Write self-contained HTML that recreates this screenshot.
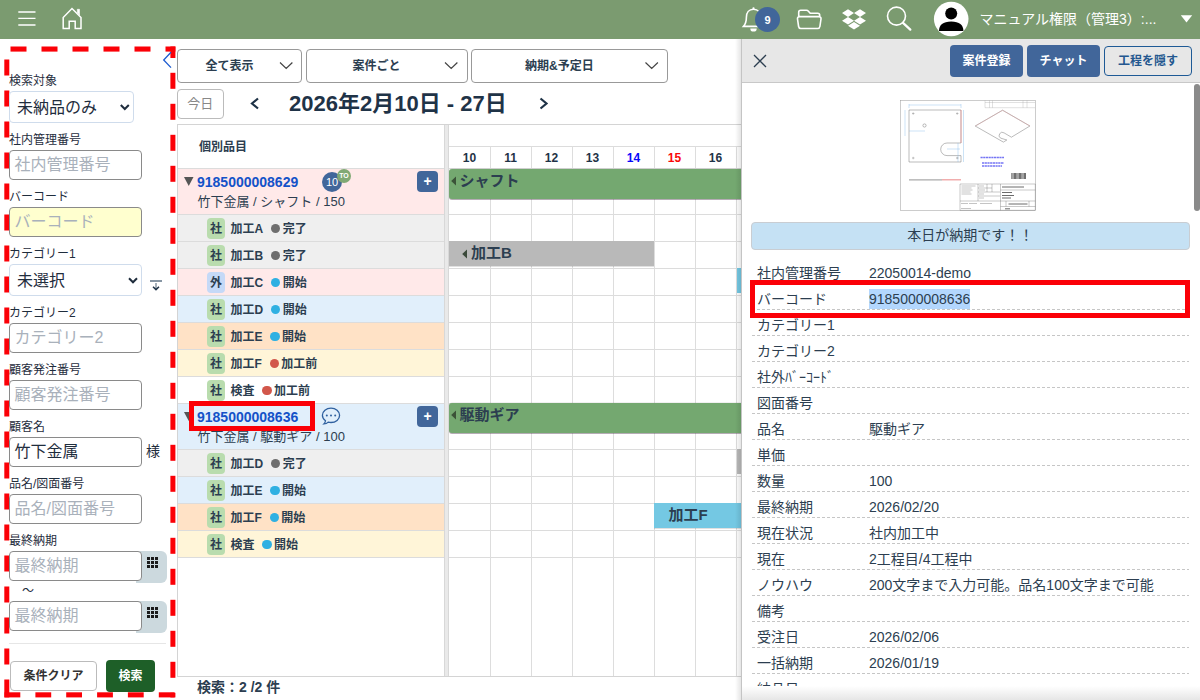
<!DOCTYPE html>
<html lang="ja">
<head>
<meta charset="utf-8">
<title>工程管理</title>
<style>
*{box-sizing:border-box;margin:0;padding:0}
html,body{width:1200px;height:700px;overflow:hidden;background:#fff}
body{font-family:"Liberation Sans","Noto Sans CJK JP",sans-serif;color:#1f3347;font-size:12px;position:relative}
.a{position:absolute;white-space:nowrap}
#top{left:0;top:0;width:1200px;height:39px;background:#7b9b70}
.lbl{font-size:12px;line-height:14px;color:#1f2d3d;left:9px}
.inp{left:9px;width:133px;height:30px;border:1px solid #8a8a8a;border-radius:4px;background:#fff;font-size:16px;line-height:28px;padding-left:4.500px;color:#a9b1bb}
.sel{left:9px;height:32px;border:1px solid #cfdcec;border-radius:4px;background:#fff;font-size:16px;line-height:32px;padding-left:7px;color:#1f2d3d}
.dd{top:49px;height:34px;border:1px solid #999;border-radius:4px;background:#fff;font-size:12px;font-weight:bold;line-height:31px;text-align:center;color:#2c3e50}
.row{left:178px;width:267px;height:27px}
.g{background:#efefef}.p{background:#ffe9e9}.b{background:#e1effb}.o{background:#ffe2c6}.y{background:#fff5d8}.w{background:#fff}
.tag{left:207px;width:18px;height:21px;border-radius:4px;background:#b9dcae;font-size:12px;font-weight:bold;line-height:22px;text-align:center;color:#2c3e50}
.tag.out{background:#c5d9f7}
.pn{left:230.500px;font-size:12px;font-weight:bold;line-height:29px;color:#2c3e50}
.dot{display:inline-block;width:9.300px;height:9.300px;border-radius:50%;vertical-align:-0.5px;margin-left:7.700px;margin-right:2.500px}
.dg{background:#6e6e6e}.db{background:#2fb0e2}.dr{background:#d2574b}
.hl{left:448px;width:293px;height:1px;background:#ddd}
.vl{top:146px;width:1px;height:530px;background:#ddd}
.dl{left:757px;font-size:14px;line-height:20px;color:#2c3e50}
.dv{left:869px;font-size:14px;line-height:20px;color:#2c3e50}
.dot-line{width:437px;height:1px;background:repeating-linear-gradient(90deg,#c6c6c6 0 3px,transparent 3px 5px)}
</style>
</head>
<body>
<!-- TOP BAR -->
<div class="a" id="top"></div>
<svg class="a" style="left:0;top:0" width="1200" height="39" viewBox="0 0 1200 39" fill="none" stroke="#fff" stroke-width="1.500">
<path d="M18.300 12h17.200M18.300 18.400h17.200M18.300 25h17.200" stroke-width="1.300"/>
<path d="M63.200 28.400V17.500L72 8.500l9 9v10.900h-5.800v-7.200h-6v7.200z" stroke-width="1.500" stroke-linejoin="miter"/>
<path d="M77.300 12.500V9.300h2.200v5.700z" fill="#fff" stroke-width=".6"/>
<path d="M753.500 9.300c-4.600 0-7.100 3.500-7.100 8 0 5-1.400 7.400-2.900 9.100h20c-1.500-1.700-2.900-4.100-2.900-9.100 0-4.500-2.500-8-7.100-8z" stroke-width="1.600"/><circle cx="753.500" cy="8.300" r="1.100" fill="#fff" stroke="none"/>
<path d="M750.300 28.400h6.400a3.200 3.200 0 0 1-6.400 0z" fill="#fff" stroke="none"/>
<circle cx="767.500" cy="19.500" r="12.500" fill="#41669a" stroke="none"/>
<path d="M798.700 16.400v-4.100c0-1.200.8-2 2-2h5.800c.8 0 1.400.3 1.900.9l1.800 2.100h7.500c1.200 0 2 .8 2 2v1.100M799.600 16.600h19.300c1.400 0 2.300 1.100 2.100 2.400l-1.100 7.500c-.2 1.200-1 2-2.200 2h-16.900c-1.200 0-2-.8-2.200-2l-1.100-7.500c-.2-1.300.7-2.400 2.100-2.400z" stroke-width="1.600"/>
<g fill="#fff" stroke="none"><path d="M848 10.500 842 14.300l6 3.800 6-3.800zM860 10.500l-6 3.800 6 3.800 6-3.800zM842 21.900l6 3.800 6-3.800-6-3.800zM860 18.100l-6 3.800 6 3.800 6-3.800zM848 27l6 3.800 6-3.800-6-3.800z" transform="translate(0,-1.200)"/></g>
<circle cx="896.500" cy="16.100" r="9" stroke-width="1.600"/><path d="M903 22.800l7.300 6.800" stroke-width="2.300" stroke-linecap="round"/>
<circle cx="951.200" cy="19" r="17.300" fill="#fff" stroke="none"/>
<g fill="#000" stroke="none"><circle cx="951.200" cy="13.500" r="6"/><path d="M939 31c0-6 4-9.500 12.200-9.500s12.200 3.500 12.200 9.500z"/></g>
<path d="M1180.800 15.300h11.400l-5.700 7.200z" fill="#fff" stroke="none"/>
</svg>
<div class="a" style="left:760.500px;top:12.500px;width:14px;text-align:center;font-size:11px;font-weight:bold;line-height:14px;color:#fff">9</div>
<div class="a" style="left:979.500px;top:8.500px;font-size:14px;line-height:20px;color:#fff">マニュアル権限（管理3）:...</div>

<!-- LEFT PANEL placeholder -->
<div id="left">
<svg class="a" style="left:0;top:40px" width="180" height="660" viewBox="0 40 180 660" fill="none">
<g fill="#fb0007"><rect x="10.5" y="46.5" width="16.0" height="5.1"/><rect x="41.5" y="46.5" width="16.0" height="5.1"/><rect x="72.5" y="46.5" width="16.0" height="5.1"/><rect x="103.5" y="46.5" width="16.0" height="5.1"/><rect x="134.5" y="46.5" width="16.0" height="5.1"/><rect x="165.5" y="46.5" width="9.9" height="5.1"/><rect x="170.4" y="46.5" width="5.0" height="11.5"/><rect x="170.4" y="72.8" width="5.0" height="16.0"/><rect x="170.4" y="103.8" width="5.0" height="16.0"/><rect x="170.4" y="134.8" width="5.0" height="16.0"/><rect x="170.4" y="165.8" width="5.0" height="16.0"/><rect x="170.4" y="196.8" width="5.0" height="16.0"/><rect x="170.4" y="227.8" width="5.0" height="16.0"/><rect x="170.4" y="258.8" width="5.0" height="16.0"/><rect x="170.4" y="289.8" width="5.0" height="16.0"/><rect x="170.4" y="320.8" width="5.0" height="16.0"/><rect x="170.4" y="351.8" width="5.0" height="16.0"/><rect x="170.4" y="382.8" width="5.0" height="16.0"/><rect x="170.4" y="413.8" width="5.0" height="16.0"/><rect x="170.4" y="444.8" width="5.0" height="16.0"/><rect x="170.4" y="475.8" width="5.0" height="16.0"/><rect x="170.4" y="506.8" width="5.0" height="16.0"/><rect x="170.4" y="537.8" width="5.0" height="16.0"/><rect x="170.4" y="568.8" width="5.0" height="16.0"/><rect x="170.4" y="599.8" width="5.0" height="16.0"/><rect x="170.4" y="630.8" width="5.0" height="16.0"/><rect x="170.4" y="661.8" width="5.0" height="16.0"/><rect x="170.4" y="692.8" width="5.0" height="4.6"/><rect x="4.5" y="692.3" width="15.8" height="5.1"/><rect x="35.4" y="692.3" width="15.8" height="5.1"/><rect x="66.2" y="692.3" width="15.8" height="5.1"/><rect x="97.1" y="692.3" width="15.8" height="5.1"/><rect x="127.9" y="692.3" width="15.8" height="5.1"/><rect x="158.8" y="692.3" width="15.8" height="5.1"/><rect x="4.3" y="59.5" width="5.0" height="16.0"/><rect x="4.3" y="90.5" width="5.0" height="16.0"/><rect x="4.3" y="121.5" width="5.0" height="16.0"/><rect x="4.3" y="152.5" width="5.0" height="16.0"/><rect x="4.3" y="183.5" width="5.0" height="16.0"/><rect x="4.3" y="214.5" width="5.0" height="16.0"/><rect x="4.3" y="245.5" width="5.0" height="16.0"/><rect x="4.3" y="276.5" width="5.0" height="16.0"/><rect x="4.3" y="307.5" width="5.0" height="16.0"/><rect x="4.3" y="338.5" width="5.0" height="16.0"/><rect x="4.3" y="369.5" width="5.0" height="16.0"/><rect x="4.3" y="400.5" width="5.0" height="16.0"/><rect x="4.3" y="431.5" width="5.0" height="16.0"/><rect x="4.3" y="462.5" width="5.0" height="16.0"/><rect x="4.3" y="493.5" width="5.0" height="16.0"/><rect x="4.3" y="524.5" width="5.0" height="16.0"/><rect x="4.3" y="555.5" width="5.0" height="16.0"/><rect x="4.3" y="586.5" width="5.0" height="16.0"/><rect x="4.3" y="617.5" width="5.0" height="16.0"/><rect x="4.3" y="648.5" width="5.0" height="16.0"/><rect x="4.3" y="679.5" width="5.0" height="17.9"/></g>
<path d="M171 52.300 163.700 60 171 67.600" stroke="#1c5bd0" stroke-width="1.300"/>
<path d="M150 281h12" stroke="#8796a4" stroke-width="2"/><path d="M156 283v5.800" stroke="#97a3ae" stroke-width="1.700"/><path d="M153 286.800l3 2.800 3-2.800" stroke="#1f3347" stroke-width="1.500"/>
</svg>
<div class="a lbl" style="top:74px">検索対象</div>
<div class="a sel" style="top:91px;width:125px">未納品のみ</div>
<div class="a lbl" style="top:133px">社内管理番号</div>
<div class="a inp" style="top:150px">社内管理番号</div>
<div class="a lbl" style="top:190px">バーコード</div>
<div class="a inp" style="top:207px;background:#ffffcf">バーコード</div>
<div class="a lbl" style="top:247px">カテゴリー1</div>
<div class="a sel" style="top:264px;width:133px">未選択</div>
<div class="a lbl" style="top:306px">カテゴリー2</div>
<div class="a inp" style="top:323px">カテゴリー2</div>
<div class="a lbl" style="top:363px">顧客発注番号</div>
<div class="a inp" style="top:380px">顧客発注番号</div>
<div class="a lbl" style="top:420px">顧客名</div>
<div class="a inp" style="top:437px;color:#1f2d3d">竹下金属</div>
<div class="a" style="left:146px;top:442px;font-size:14px;line-height:18px;color:#1f2d3d">様</div>
<div class="a lbl" style="top:477px">品名/図面番号</div>
<div class="a inp" style="top:494px">品名/図面番号</div>
<div class="a lbl" style="top:534px">最終納期</div>
<div class="a" style="left:136px;top:551px;width:31px;height:32px;background:#ccd9de;border-radius:0 6px 6px 0"></div>
<div class="a inp" style="top:551px">最終納期</div>
<div class="a" style="left:22px;top:584px;font-size:12px;line-height:14px;color:#1f2d3d">〜</div>
<div class="a" style="left:136px;top:601px;width:31px;height:32px;background:#ccd9de;border-radius:0 6px 6px 0"></div>
<div class="a inp" style="top:601px">最終納期</div>
<svg class="a" style="left:147px;top:557px" width="12" height="64" fill="#1a1a1a"><rect x="0" y="0" width="3" height="3"/><rect x="4" y="0" width="3" height="3"/><rect x="8" y="0" width="3" height="3"/><rect x="0" y="4" width="3" height="3"/><rect x="4" y="4" width="3" height="3"/><rect x="8" y="4" width="3" height="3"/><rect x="0" y="8" width="3" height="3"/><rect x="4" y="8" width="3" height="3"/><rect x="8" y="8" width="3" height="3"/><rect x="0" y="50" width="3" height="3"/><rect x="4" y="50" width="3" height="3"/><rect x="8" y="50" width="3" height="3"/><rect x="0" y="54" width="3" height="3"/><rect x="4" y="54" width="3" height="3"/><rect x="8" y="54" width="3" height="3"/><rect x="0" y="58" width="3" height="3"/><rect x="4" y="58" width="3" height="3"/><rect x="8" y="58" width="3" height="3"/></svg>
<div class="a" style="left:9px;top:643px;width:157px;height:1px;background:#e6e6e6"></div>
<div class="a" style="left:10px;top:661px;width:87px;height:30px;border:1px solid #bbb;border-radius:4px;background:#fff;font-size:12px;font-weight:bold;line-height:28px;text-align:center;color:#333">条件クリア</div>
<div class="a" style="left:106px;top:660px;width:49px;height:32px;border-radius:4px;background:#1e5f28;font-size:12px;font-weight:bold;line-height:32px;text-align:center;color:#fff">検索</div>
<svg class="a" style="left:0;top:0" width="180" height="700" fill="none" stroke="#1f2d3d" stroke-width="2"><path d="M120.800 105l4 4 4-4M129 278.300l4 4 4-4"/></svg>
</div>

<!-- MIDDLE placeholder -->
<div id="mid">
<div class="a dd" style="left:177px;width:125px"></div>
<div class="a" style="left:205.5px;top:58px;font-size:12px;font-weight:bold;line-height:16px;color:#2c3e50">全て表示</div>
<div class="a dd" style="left:306px;width:162px"></div>
<div class="a" style="left:352.5px;top:58px;font-size:12px;font-weight:bold;line-height:16px;color:#2c3e50">案件ごと</div>
<div class="a dd" style="left:471px;width:197px"></div>
<div class="a" style="left:525px;top:58px;font-size:12px;font-weight:bold;line-height:16px;color:#2c3e50">納期&amp;予定日</div>
<svg class="a" style="left:170px;top:40px" width="580" height="90" viewBox="170 40 580 90" fill="none" stroke="#444" stroke-width="1.2"><path d="M280 62.500l6.200 6 6.200-6M445 62.500l6.200 6 6.200-6M645.500 62.500l6.200 6 6.200-6"/><path d="M258 98.500 252 103.500l6 5M540.500 98.500l6 5-6 5" stroke="#1f3347" stroke-width="2.200"/></svg>
<div class="a" style="left:177px;top:89px;width:46.500px;height:30px;border:1px solid #bbb;border-radius:4px;background:#fff;font-size:13px;line-height:27px;text-align:center;color:#888">今日</div>
<div class="a" style="left:289px;top:90px;font-size:22px;font-weight:bold;line-height:28px;color:#1f3347">2026年2月10日 - 27日</div>
<div class="a" style="left:177px;top:124px;width:571px;height:553px;border:1px solid #d4d4d4;border-right:0"></div>
<div class="a" style="left:199px;top:139px;font-size:12px;font-weight:bold;line-height:16px;color:#2c3e50">個別品目</div>
<div class="a row p" style="top:168.5px;height:46px"></div>
<div class="a row g" style="top:214.5px;height:27px"></div>
<div class="a row g" style="top:241.5px;height:27px"></div>
<div class="a row p" style="top:268.5px;height:27px"></div>
<div class="a row b" style="top:295.5px;height:27px"></div>
<div class="a row o" style="top:322.5px;height:27px"></div>
<div class="a row y" style="top:349.5px;height:27px"></div>
<div class="a row w" style="top:376.5px;height:27px"></div>
<div class="a row b" style="top:403.5px;height:46px"></div>
<div class="a row g" style="top:449.5px;height:27px"></div>
<div class="a row b" style="top:476.5px;height:27px"></div>
<div class="a row o" style="top:503.5px;height:27px"></div>
<div class="a row y" style="top:530.5px;height:27px"></div>
<div class="a" style="left:178px;top:168px;width:570px;height:1px;background:#dcdcdc"></div>
<div class="a" style="left:178px;top:214px;width:570px;height:1px;background:#dcdcdc"></div>
<div class="a" style="left:178px;top:241px;width:570px;height:1px;background:#dcdcdc"></div>
<div class="a" style="left:178px;top:268px;width:570px;height:1px;background:#dcdcdc"></div>
<div class="a" style="left:178px;top:295px;width:570px;height:1px;background:#dcdcdc"></div>
<div class="a" style="left:178px;top:322px;width:570px;height:1px;background:#dcdcdc"></div>
<div class="a" style="left:178px;top:349px;width:570px;height:1px;background:#dcdcdc"></div>
<div class="a" style="left:178px;top:376px;width:570px;height:1px;background:#dcdcdc"></div>
<div class="a" style="left:178px;top:403px;width:570px;height:1px;background:#dcdcdc"></div>
<div class="a" style="left:178px;top:449px;width:570px;height:1px;background:#dcdcdc"></div>
<div class="a" style="left:178px;top:476px;width:570px;height:1px;background:#dcdcdc"></div>
<div class="a" style="left:178px;top:503px;width:570px;height:1px;background:#dcdcdc"></div>
<div class="a" style="left:178px;top:530px;width:570px;height:1px;background:#dcdcdc"></div>
<div class="a" style="left:178px;top:557px;width:570px;height:1px;background:#dcdcdc"></div>
<div class="a" style="left:449px;top:146px;width:300px;height:1px;background:#dcdcdc"></div>
<div class="a vl" style="left:490px"></div>
<div class="a vl" style="left:531px"></div>
<div class="a vl" style="left:572px"></div>
<div class="a vl" style="left:613px"></div>
<div class="a vl" style="left:654px"></div>
<div class="a vl" style="left:695px"></div>
<div class="a vl" style="left:736px"></div>
<div class="a" style="left:444px;top:125px;width:5px;height:551px;background:#e9e9e9;border-left:1px solid #d8d8d8;border-right:1px solid #d8d8d8"></div>
<div class="a" style="left:449px;top:150px;width:41px;text-align:center;font-size:12px;font-weight:bold;line-height:16px;color:#1f3347">10</div>
<div class="a" style="left:490px;top:150px;width:41px;text-align:center;font-size:12px;font-weight:bold;line-height:16px;color:#1f3347">11</div>
<div class="a" style="left:531px;top:150px;width:41px;text-align:center;font-size:12px;font-weight:bold;line-height:16px;color:#1f3347">12</div>
<div class="a" style="left:572px;top:150px;width:41px;text-align:center;font-size:12px;font-weight:bold;line-height:16px;color:#1f3347">13</div>
<div class="a" style="left:613px;top:150px;width:41px;text-align:center;font-size:12px;font-weight:bold;line-height:16px;color:#0808fa">14</div>
<div class="a" style="left:654px;top:150px;width:41px;text-align:center;font-size:12px;font-weight:bold;line-height:16px;color:#fa0808">15</div>
<div class="a" style="left:695px;top:150px;width:41px;text-align:center;font-size:12px;font-weight:bold;line-height:16px;color:#1f3347">16</div>
<svg class="a" style="left:183.500px;top:177.0px" width="10" height="9"><path d="M0 0h9.500L4.750 9z" fill="#555"/></svg>
<div class="a" style="left:197px;top:172.5px;font-size:14px;font-weight:bold;line-height:18px;color:#1452c8">9185000008629</div>
<div class="a" style="left:197.500px;top:192.5px;font-size:13px;line-height:18px;color:#2c3e50">竹下金属 / シャフト / 150</div>
<div class="a" style="left:417px;top:171px;width:21px;height:21px;border-radius:4px;background:#41669a;color:#fff;font-size:14px;font-weight:bold;line-height:20px;text-align:center">+</div>
<svg class="a" style="left:183.500px;top:412.0px" width="10" height="9"><path d="M0 0h9.500L4.750 9z" fill="#555"/></svg>
<div class="a" style="left:197px;top:407.5px;font-size:14px;font-weight:bold;line-height:18px;color:#1452c8">9185000008636</div>
<div class="a" style="left:197.500px;top:427.5px;font-size:13px;line-height:18px;color:#2c3e50">竹下金属 / 駆動ギア / 100</div>
<div class="a" style="left:417px;top:406px;width:21px;height:21px;border-radius:4px;background:#41669a;color:#fff;font-size:14px;font-weight:bold;line-height:20px;text-align:center">+</div>
<div class="a" style="left:322px;top:171.500px;width:20px;height:20px;border-radius:50%;background:#41669a;color:#fff;font-size:11px;line-height:20px;text-align:center">10</div>
<div class="a" style="left:337px;top:169px;width:14px;height:14px;border-radius:50%;background:#80a974;color:#fff;font-size:7px;font-weight:bold;line-height:14px;text-align:center">TO</div>
<svg class="a" style="left:320px;top:404.500px" width="22" height="22" viewBox="0 0 22 22" fill="none" stroke="#2f609f" stroke-width="1.300"><path d="M11 3.100c-4.800 0-8.600 3.200-8.600 7.200 0 2.200 1.200 4.200 3.100 5.500-.1 1-.6 2.100-1.600 3.100 1.800-.1 3.300-.8 4.300-1.800.9.200 1.800.4 2.800.4 4.800 0 8.600-3.200 8.600-7.200S15.800 3.100 11 3.100z"/><g fill="#2f609f" stroke="none"><circle cx="6.800" cy="10.400" r="1"/><circle cx="11" cy="10.400" r="1"/><circle cx="15.200" cy="10.400" r="1"/></g></svg>
<div class="a tag" style="top:218.0px">社</div>
<div class="a pn" style="top:214.5px">加工A<span class="dot dg"></span>完了</div>
<div class="a tag" style="top:245.0px">社</div>
<div class="a pn" style="top:241.5px">加工B<span class="dot dg"></span>完了</div>
<div class="a tag out" style="top:272.0px">外</div>
<div class="a pn" style="top:268.5px">加工C<span class="dot db"></span>開始</div>
<div class="a tag" style="top:299.0px">社</div>
<div class="a pn" style="top:295.5px">加工D<span class="dot db"></span>開始</div>
<div class="a tag" style="top:326.0px">社</div>
<div class="a pn" style="top:322.5px">加工E<span class="dot db"></span>開始</div>
<div class="a tag" style="top:353.0px">社</div>
<div class="a pn" style="top:349.5px">加工F<span class="dot dr"></span>加工前</div>
<div class="a tag" style="top:380.0px">社</div>
<div class="a pn" style="top:376.5px">検査<span class="dot dr"></span>加工前</div>
<div class="a tag" style="top:453.0px">社</div>
<div class="a pn" style="top:449.5px">加工D<span class="dot dg"></span>完了</div>
<div class="a tag" style="top:480.0px">社</div>
<div class="a pn" style="top:476.5px">加工E<span class="dot db"></span>開始</div>
<div class="a tag" style="top:507.0px">社</div>
<div class="a pn" style="top:503.5px">加工F<span class="dot db"></span>開始</div>
<div class="a tag" style="top:534.0px">社</div>
<div class="a pn" style="top:530.5px">検査<span class="dot db"></span>開始</div>
<div class="a" style="left:449px;top:169px;width:300px;height:30px;background:#74a870;border-radius:3px 0 0 3px;box-shadow:0 1px 0 rgba(90,70,90,.45),0 -.5px 0 rgba(0,0,0,.12)"></div>
<svg class="a" style="left:451px;top:176px" width="6" height="10"><path d="M5 .5v9L.2 5z" fill="#3b5238"/></svg>
<div class="a" style="left:459.500px;top:166px;font-size:15px;font-weight:bold;line-height:29px;color:#2c3e50">シャフト</div>
<div class="a" style="left:449px;top:403px;width:300px;height:30px;background:#74a870;border-radius:3px 0 0 3px;box-shadow:0 1px 0 rgba(90,70,90,.45),0 -.5px 0 rgba(0,0,0,.12)"></div>
<svg class="a" style="left:451px;top:409.500px" width="6" height="10"><path d="M5 .5v9L.2 5z" fill="#3b5238"/></svg>
<div class="a" style="left:459.500px;top:399.500px;font-size:15px;font-weight:bold;line-height:29px;color:#2c3e50">駆動ギア</div>
<div class="a" style="left:449px;top:241px;width:205px;height:25px;background:#b9b9b9;box-shadow:0 1px 0 rgba(0,0,0,.12)"></div>
<svg class="a" style="left:461.500px;top:248.500px" width="6" height="10"><path d="M5 .5v9L.2 5z" fill="#3b4a3a"/></svg>
<div class="a" style="left:471px;top:241px;font-size:15px;font-weight:bold;line-height:24px;color:#2c3e50">加工B</div>
<div class="a" style="left:654px;top:503px;width:95px;height:25px;background:#74c8e3;box-shadow:0 1px 0 rgba(0,0,0,.12)"></div>
<div class="a" style="left:668.500px;top:503px;font-size:15px;font-weight:bold;line-height:24px;color:#2c3e50">加工F</div>
<div class="a" style="left:737px;top:268px;width:6px;height:25px;background:#74c8e3"></div>
<div class="a" style="left:737px;top:449px;width:6px;height:25px;background:#b9b9b9"></div>
<div class="a" style="left:197px;top:678px;font-size:14px;font-weight:bold;line-height:18px;color:#2c3e50">検索：2 /2 件</div>
<div class="a" style="left:189px;top:401px;width:125.500px;height:30px;border:5px solid #fb0007"></div>
</div>

<!-- RIGHT placeholder -->
<div id="right">
<div class="a" style="left:735px;top:39px;width:6px;height:661px;background:linear-gradient(90deg,rgba(0,0,0,0),rgba(0,0,0,.10))"></div>
<div class="a" style="left:741px;top:39px;width:459px;height:661px;background:#fff;border-left:1px solid #c4c4c4"></div>
<div class="a" style="left:742px;top:39px;width:458px;height:43.500px;background:#e7e7e7;border-bottom:1px solid #c8c8c8"></div>
<svg class="a" style="left:753px;top:54px" width="14" height="14" fill="none" stroke="#2c3e50" stroke-width="1.300"><path d="M1 1l12 12M13 1 1 13"/></svg>
<div class="a" style="left:950px;top:45px;width:73px;height:31.500px;border-radius:4px;background:#41669a;color:#fff;font-size:12px;font-weight:bold;line-height:33.500px;text-align:center">案件登録</div>
<div class="a" style="left:1027px;top:45px;width:73px;height:31.500px;border-radius:4px;background:#41669a;color:#fff;font-size:12px;font-weight:bold;line-height:33.500px;text-align:center">チャット</div>
<div class="a" style="left:1104px;top:46px;width:88px;height:30px;border:1px solid #1e5a96;border-radius:4px;background:#e7e7e7;color:#24578f;font-size:12px;font-weight:bold;line-height:29.500px;text-align:center">工程を隠す</div>
<svg class="a" style="left:900px;top:100px" width="136" height="111" viewBox="0 0 136 111" fill="none" stroke="#777" stroke-width=".5">
<rect x=".25" y=".25" width="135" height="110.300" fill="#fff" stroke="#999"/>
<path d="M9 10h52v33H47a6.300 6.300 0 0 0 0 12.600h14V62H9z" stroke="#666" stroke-width=".45"/>
<path d="M9 5h52M5 10v26M63.500 10v52M9 8v-4M61 8v-4M9 31h16M58 43v19M47 49h13" stroke="#7fb8e8" stroke-width=".4"/>
<circle cx="24.500" cy="25.500" r="1.600"/><path d="M12 13.500h2.500M13.200 12.300v2.500M12 58h2.500M13.200 56.800v2.500M56 13.500h2.500M57.200 12.300v2.500M56 58h2.500M57.200 56.800v2.500" stroke-width=".4"/>
<path d="M61 10v33" stroke="#e88" stroke-width=".6"/>
<path d="M102.600 10.200 129.900 26 111.400 37.200l-7.300-4.300a3.100 3.100 0 0 0-3.600 5.200L106.800 40l-3.400 2.100L75.200 26z" stroke="#666" stroke-width=".45"/>
<path d="M102.500 10.300 130 26M102.500 10.300 75.500 26" stroke="#d99" stroke-width=".4"/>
<path d="M85 .5v7.200h50M89.500.5v7.200M92.500.5v7.200M123 .5v7.200M127 .5v7.200M85 2.500h50" stroke-width=".3" stroke="#999"/>
<path d="M80.500 57.500h23.500M82 63h22M82 66h20" stroke="#3a3af0" stroke-width="1.500" stroke-dasharray="2.200 .5" opacity=".7"/>
<path d="M111.500 76h15" stroke="#333" stroke-width="6" stroke-dasharray=".7 .55"/>
<path d="M9 79.800h33" stroke="#aaa" stroke-width="1.200"/><path d="M42 79.800h19" stroke="#e99" stroke-width="1.200"/>
<path d="M60 84h75.300v26.300H60zM100.500 84v26.300M60 101h40.500M78 84v17M100.500 90h34.800M100.500 101h34.800M100.500 106.500h34.800M87 84v8M92 84v8M78 88h14M78 92h22M78 96h22M106 101v5.500M129 101v5.500" stroke="#666" stroke-width=".35"/>
<path d="M102 87h22M102 92.500h10M102 95.500h12M102 98h9M108.500 104h19M105 108.800h5" stroke="#222" stroke-width=".9" opacity=".75"/>
<path d="M61.500 86h14M61.500 88h10M61.500 90h11M61.500 92h9M61.500 94h10M79 86h5M79 90h6M79 94h5M79 98h5M61 103.500h7M69 103.500h8M80 103.500h12M61 108.500h10" stroke="#555" stroke-width=".5" opacity=".7"/>
</svg>
<div class="a" style="left:1194px;top:84px;width:6px;height:127px;border-radius:3px;background:#8a8a8a"></div>
<div class="a" style="left:751px;top:222px;width:438.500px;height:28px;background:#c5e1f4;border:1px solid #c9cdd2;border-radius:4px;font-size:14px;line-height:25.500px;text-align:center;color:#2c3e50">本日が納期です！！</div>
<div class="a" style="left:741px;top:82px;width:459px;height:604px;overflow:hidden">
<div class="a" style="left:128px;top:207px;width:101px;height:19.500px;background:#b3d7fe"></div>
<div class="a dl" style="left:16px;top:181px">社内管理番号</div>
<div class="a dv" style="left:128px;top:181px">22050014-demo</div>
<div class="a dot-line" style="left:10.500px;top:201.0px"></div>
<div class="a dl" style="left:16px;top:207px">バーコード</div>
<div class="a dv" style="left:128px;top:207px">9185000008636</div>
<div class="a dot-line" style="left:10.500px;top:227.0px"></div>
<div class="a dl" style="left:16px;top:233px">カテゴリー1</div>
<div class="a dot-line" style="left:10.500px;top:253.0px"></div>
<div class="a dl" style="left:16px;top:259px">カテゴリー2</div>
<div class="a dot-line" style="left:10.500px;top:279.0px"></div>
<div class="a dl" style="left:16px;top:285px">社外ﾊﾞｰｺｰﾄﾞ</div>
<div class="a dot-line" style="left:10.500px;top:305.0px"></div>
<div class="a dl" style="left:16px;top:311px">図面番号</div>
<div class="a dot-line" style="left:10.500px;top:331.0px"></div>
<div class="a dl" style="left:16px;top:337px">品名</div>
<div class="a dv" style="left:128px;top:337px">駆動ギア</div>
<div class="a dot-line" style="left:10.500px;top:357.0px"></div>
<div class="a dl" style="left:16px;top:363px">単価</div>
<div class="a dot-line" style="left:10.500px;top:383.0px"></div>
<div class="a dl" style="left:16px;top:389px">数量</div>
<div class="a dv" style="left:128px;top:389px">100</div>
<div class="a dot-line" style="left:10.500px;top:409.0px"></div>
<div class="a dl" style="left:16px;top:415px">最終納期</div>
<div class="a dv" style="left:128px;top:415px">2026/02/20</div>
<div class="a dot-line" style="left:10.500px;top:435.0px"></div>
<div class="a dl" style="left:16px;top:441px">現在状況</div>
<div class="a dv" style="left:128px;top:441px">社内加工中</div>
<div class="a dot-line" style="left:10.500px;top:461.0px"></div>
<div class="a dl" style="left:16px;top:467px">現在</div>
<div class="a dv" style="left:128px;top:467px">2工程目/4工程中</div>
<div class="a dot-line" style="left:10.500px;top:487.0px"></div>
<div class="a dl" style="left:16px;top:493px">ノウハウ</div>
<div class="a dv" style="left:128px;top:493px">200文字まで入力可能。品名100文字まで可能</div>
<div class="a dot-line" style="left:10.500px;top:513.0px"></div>
<div class="a dl" style="left:16px;top:519px">備考</div>
<div class="a dot-line" style="left:10.500px;top:539.0px"></div>
<div class="a dl" style="left:16px;top:545px">受注日</div>
<div class="a dv" style="left:128px;top:545px">2026/02/06</div>
<div class="a dot-line" style="left:10.500px;top:565.0px"></div>
<div class="a dl" style="left:16px;top:571px">一括納期</div>
<div class="a dv" style="left:128px;top:571px">2026/01/19</div>
<div class="a dot-line" style="left:10.500px;top:591.0px"></div>
<div class="a dl" style="left:16px;top:597px">納品日</div>
<div class="a dot-line" style="left:10.500px;top:617.0px"></div>
</div>
<div class="a" style="left:742px;top:686px;width:458px;height:14px;background:linear-gradient(#fff,#e6e6e6)"></div>
<div class="a" style="left:750px;top:280px;width:440px;height:37.500px;border:5px solid #fb0007"></div>
</div>
</body>
</html>
